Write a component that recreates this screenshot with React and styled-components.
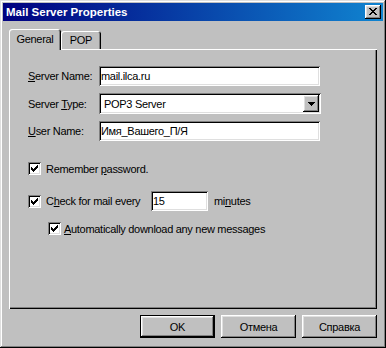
import React from "react";
import styled, { createGlobalStyle } from "styled-components";

const GlobalStyle = createGlobalStyle`
  html, body { margin: 0; padding: 0; background: #c0c0c0; }
  body { font-family: "Liberation Sans", Arial, sans-serif; font-size: 11px; color: #000; letter-spacing: -0.3px; }
  * { box-sizing: border-box; }
`;

const raised = `inset -1px -1px #000, inset 1px 1px #fff, inset -2px -2px #808080, inset 2px 2px #dfdfdf`;
const sunken = `inset 1px 1px #808080, inset -1px -1px #fff, inset 2px 2px #000, inset -2px -2px #dfdfdf`;

const Window = styled.div`
  width: 386px;
  height: 348px;
  padding: 3px;
  background: #c0c0c0;
  box-shadow: inset -1px -1px #000, inset 1px 1px #dfdfdf, inset -2px -2px #808080, inset 2px 2px #fff;
  display: flex;
  flex-direction: column;
`;

const TitleBar = styled.div`
  height: 18px;
  background: linear-gradient(90deg, #000080, #1084d0);
  display: flex;
  align-items: center;
  justify-content: space-between;
  padding: 0 2px 0 3px;
  color: #fff;
  font-weight: bold;
  font-size: 11.5px;
  letter-spacing: 0;
`;

const CloseButton = styled.div`
  width: 16px;
  height: 14px;
  background: #c0c0c0;
  box-shadow: ${raised};
  display: flex;
  align-items: center;
  justify-content: center;
  padding-bottom: 1px;
`;

const Body = styled.div`
  padding: 8px 6px 0 6px;
  display: flex;
  flex-direction: column;
`;

const TabStrip = styled.div`
  display: flex;
  align-items: flex-end;
  height: 20px;
`;

const Tab = styled.div`
  width: ${(p) => p.$w}px;
  height: ${(p) => (p.$active ? 21 : 18)}px;
  margin-bottom: ${(p) => (p.$active ? -1 : 0)}px;
  position: relative;
  z-index: ${(p) => (p.$active ? 1 : 0)};
  background: #c0c0c0;
  border-radius: 3px 3px 0 0;
  box-shadow: inset 1px 1px #fff, inset -1px 0 #000, inset -2px 0 #808080;
  display: flex;
  align-items: center;
  justify-content: center;
  padding-bottom: ${(p) => (p.$active ? 1 : 0)}px;
`;

const Panel = styled.div`
  height: 260px;
  padding: 17px 0 0 19px;
  box-shadow: inset 1px 1px #fff, inset -1px -1px #000, inset -2px -2px #808080;
`;

const FormGrid = styled.div`
  display: grid;
  grid-template-columns: 71px auto;
  row-gap: 7px;
  align-items: center;
  justify-content: start;
`;

const Label = styled.span`
  white-space: nowrap;
  width: ${(p) => (p.$w ? `${p.$w}px` : "auto")};
  margin-left: ${(p) => p.$ml || 0}px;
`;

const Accel = styled.span`
  text-decoration: underline;
  text-underline-offset: 1px;
`;

const Field = styled.input`
  width: ${(p) => p.$w}px;
  height: 20px;
  border: none;
  outline: none;
  padding: 0 2px;
  margin: 0;
  font-family: inherit;
  font-size: 11px;
  letter-spacing: inherit;
  color: #000;
  background: #fff;
  box-shadow: ${sunken};
`;

const Select = styled.div`
  width: 222px;
  height: 21px;
  background: #fff;
  box-shadow: ${sunken};
  display: flex;
  align-items: center;
  padding: 0 2px 0 5px;
`;

const SelectText = styled.span`
  flex: 1;
`;

const DropButton = styled.div`
  width: 16px;
  height: 17px;
  background: #c0c0c0;
  box-shadow: ${raised};
  display: flex;
  align-items: center;
  justify-content: center;
`;

const Options = styled.div`
  display: flex;
  flex-direction: column;
  margin-top: 21px;
`;

const OptionRow = styled.div`
  display: flex;
  align-items: center;
  gap: ${(p) => p.$gap ?? 5}px;
  margin-top: ${(p) => p.$top || 0}px;
  margin-left: ${(p) => p.$indent || 0}px;
  height: ${(p) => p.$h || 13}px;
`;

const CheckBox = styled.span`
  width: 13px;
  height: 13px;
  flex: none;
  background: #fff;
  box-shadow: ${sunken};
  display: flex;
  align-items: center;
  justify-content: center;
`;

const ButtonRow = styled.div`
  display: flex;
  justify-content: flex-end;
  gap: 6px;
  margin-top: 6px;
`;

const Button = styled.div`
  width: 75px;
  height: 23px;
  background: #c0c0c0;
  display: flex;
  align-items: center;
  justify-content: center;
  box-shadow: ${(p) =>
    p.$default
      ? `inset 0 0 0 1px #000, inset -2px -2px #000, inset 2px 2px #fff, inset -3px -3px #808080, inset 3px 3px #dfdfdf`
      : raised};
`;

const Check = ({ checked = true }) => (
  <CheckBox>
    {checked && (
      <svg width="13" height="13" viewBox="0 0 13 13" shapeRendering="crispEdges">
        <path d="M3 5h1v1h1v1h1V6h1V5h1V4h1V3h1v3H9v1H8v1H7v1H6v1H5V9H4V8H3z" fill="#000" />
      </svg>
    )}
  </CheckBox>
);

export default function App() {
  return (
    <>
      <GlobalStyle />
      <Window>
        <TitleBar>
          <span>Mail Server Properties</span>
          <CloseButton>
            <svg width="8" height="7" viewBox="0 0 8 7" shapeRendering="crispEdges">
              <path d="M0 0h2v1h1v1h2V1h1V0h2v1H7v1H6v1H5v1h1v1h1v1h1v1H6V6H5V5H3v1H2v1H0V6h1V5h1V4h1V3H2V2H1V1H0z" fill="#000" />
            </svg>
          </CloseButton>
        </TitleBar>
        <Body>
          <TabStrip>
            <Tab $active $w={52}>General</Tab>
            <Tab $w={40}>POP</Tab>
          </TabStrip>
          <Panel>
            <FormGrid>
              <Label><Accel>S</Accel>erver Name:</Label>
              <Field $w={221} readOnly value="mail.ilca.ru" />
              <Label>Server <Accel>T</Accel>ype:</Label>
              <Select>
                <SelectText>POP3 Server</SelectText>
                <DropButton>
                  <svg width="7" height="4" viewBox="0 0 7 4" shapeRendering="crispEdges">
                    <path d="M0 0h7v1H6v1H5v1H4v1H3V3H2V2H1V1H0z" fill="#000" />
                  </svg>
                </DropButton>
              </Select>
              <Label><Accel>U</Accel>ser Name:</Label>
              <Field $w={221} readOnly value="Имя_Вашего_П/Я" />
            </FormGrid>
            <Options>
              <OptionRow>
                <Check />
                <Label>Remember <Accel>p</Accel>assword.</Label>
              </OptionRow>
              <OptionRow $top={16} $h={20}>
                <Check />
                <Label $w={100}>C<Accel>h</Accel>eck for mail every</Label>
                <Field $w={57} readOnly value="15" />
                <Label $ml={1}>mi<Accel>n</Accel>utes</Label>
              </OptionRow>
              <OptionRow $top={11} $indent={20} $gap={3}>
                <Check />
                <Label><Accel>A</Accel>utomatically download any new messages</Label>
              </OptionRow>
            </Options>
          </Panel>
          <ButtonRow>
            <Button $default>OK</Button>
            <Button>Отмена</Button>
            <Button>Справка</Button>
          </ButtonRow>
        </Body>
      </Window>
    </>
  );
}
